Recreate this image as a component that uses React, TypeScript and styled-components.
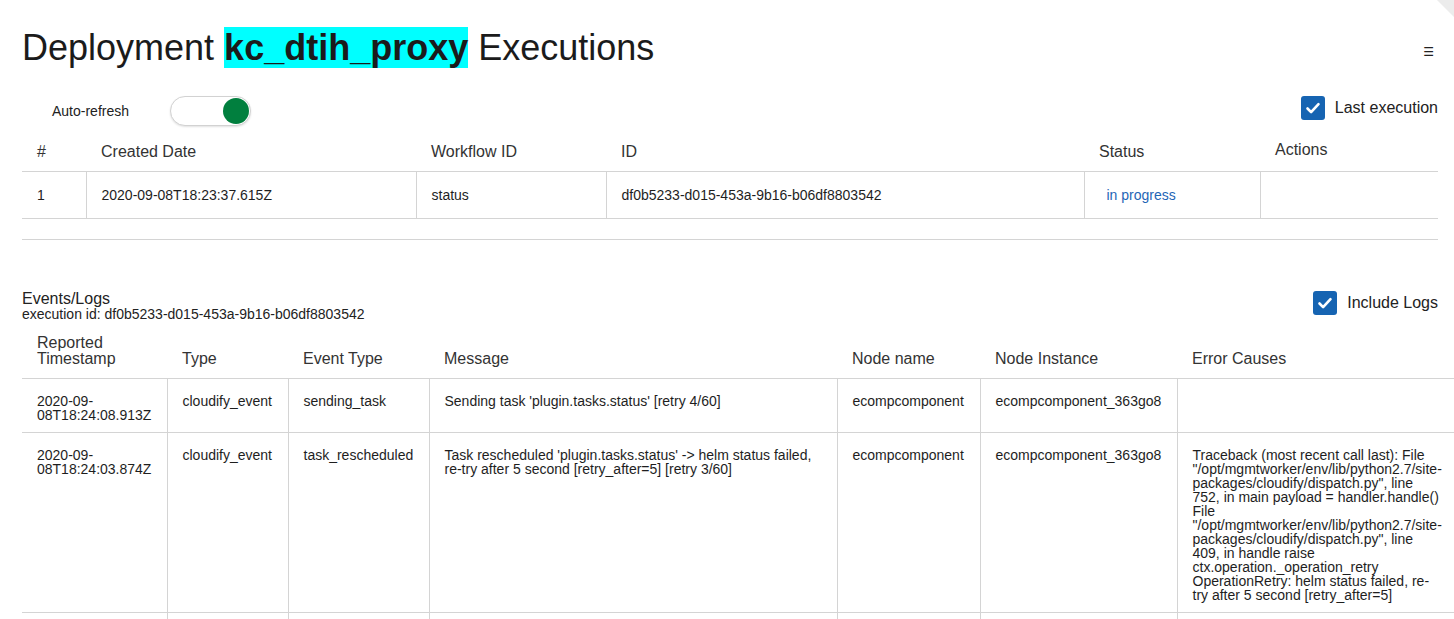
import React from "react";
import styled, { createGlobalStyle } from "styled-components";

const GlobalStyle = createGlobalStyle`
  html, body {
    margin: 0;
    padding: 0;
    background: #fff;
    overflow-x: hidden;
  }
  body {
    font-family: "Liberation Sans", Arial, sans-serif;
    color: #222;
  }
`;

const Page = styled.div`
  position: relative;
  padding: 27px 16px 0 22px;
`;

const CornerFold = styled.div`
  position: absolute;
  top: 0;
  right: 0;
  width: 0;
  height: 0;
  border-top: 17px solid #ececec;
  border-left: 17px solid transparent;
`;

const Header = styled.div`
  display: flex;
  justify-content: space-between;
  align-items: flex-end;
`;

const Title = styled.h1`
  margin: 0;
  font-size: 36px;
  font-weight: 400;
  line-height: 41px;
  color: #1b1b1b;
`;

const Highlight = styled.span`
  background: #00ffff;
  font-weight: 700;
`;

const MenuButton = styled.span`
  font-family: "DejaVu Sans", sans-serif;
  font-size: 12px;
  line-height: 13px;
  margin: 0 4px 9px 0;
  color: #222;
`;

const Controls = styled.div`
  display: flex;
  justify-content: space-between;
  align-items: flex-start;
  min-height: 32px;
  margin-top: 28px;
`;

const RefreshGroup = styled.div`
  display: flex;
  align-items: center;
  gap: 41px;
  padding-left: 30px;
  font-size: 14px;
  color: #222;
`;

const Toggle = styled.div<{ $on: boolean }>`
  box-sizing: border-box;
  width: 81px;
  height: 30px;
  border: 1px solid #d2d2d2;
  border-radius: 15px;
  background: #fff;
  box-shadow: 0 1px 2px rgba(0, 0, 0, 0.12);
  display: flex;
  align-items: center;
  justify-content: ${(p) => (p.$on ? "flex-end" : "flex-start")};
  padding: 0 1px;
`;

const Knob = styled.span`
  width: 26px;
  height: 26px;
  border-radius: 50%;
  background: #017f3e;
`;

const CheckLabel = styled.label`
  display: flex;
  align-items: center;
  gap: 10px;
  font-size: 16px;
  color: #222;
`;

const Box = styled.span`
  width: 24px;
  height: 24px;
  border-radius: 3px;
  background: #1664b2;
  display: flex;
  align-items: center;
  justify-content: center;
`;

const Table = styled.table<{ $width: number }>`
  width: ${(p) => p.$width}px;
  table-layout: fixed;
  border-collapse: collapse;
  line-height: 1;
`;

const HeadCell = styled.th<{ $raise?: boolean }>`
  text-align: left;
  vertical-align: bottom;
  font-weight: 400;
  font-size: 16px;
  color: #333;
  padding: 14px 15px ${(p) => (p.$raise ? 13 : 11)}px;
  border-bottom: 1px solid #d4d4d4;
`;

const Cell = styled.td`
  vertical-align: top;
  font-size: 14px;
  color: #1e1e1e;
  padding: 15px 15px 10px;
  border-bottom: 1px solid #d4d4d4;
  border-left: 1px solid #d4d4d4;
  word-wrap: break-word;
  &:first-child {
    border-left: none;
  }
`;

const ExecCell = styled(Cell)`
  padding: 16px 15px;
`;

const FillerCell = styled(Cell)`
  height: 40px;
`;

const StatusLink = styled.a`
  color: #1f66b6;
  text-decoration: none;
  padding-left: 7px;
`;

const Divider = styled.div`
  height: 1px;
  width: 1416px;
  background: #d4d4d4;
  margin-top: 20px;
`;

const EventsHeader = styled.div`
  display: flex;
  justify-content: space-between;
  align-items: flex-start;
  margin-top: 51px;
`;

const EventsTitle = styled.div`
  font-size: 16px;
  line-height: 16px;
  color: #222;
`;

const ExecId = styled.div`
  font-size: 14px;
  line-height: 14px;
  color: #222;
`;

const Check = () => (
  <Box>
    <svg width="16" height="16" viewBox="0 0 16 16">
      <path d="M2.5 8.5l3.6 3.6 7.4-8" fill="none" stroke="#fff" strokeWidth="2.6" strokeLinecap="round" strokeLinejoin="round" />
    </svg>
  </Box>
);

const execCols = [64, 330, 190, 478, 176, 178];
const eventCols = [145, 121, 141, 408, 143, 197, 280];

const events = [
  {
    ts: "2020-09-08T18:24:08.913Z",
    type: "cloudify_event",
    eventType: "sending_task",
    message: "Sending task 'plugin.tasks.status' [retry 4/60]",
    node: "ecompcomponent",
    instance: "ecompcomponent_363go8",
    error: "",
  },
  {
    ts: "2020-09-08T18:24:03.874Z",
    type: "cloudify_event",
    eventType: "task_rescheduled",
    message: "Task rescheduled 'plugin.tasks.status' -> helm status failed, re-try after 5 second [retry_after=5] [retry 3/60]",
    node: "ecompcomponent",
    instance: "ecompcomponent_363go8",
    error:
      'Traceback (most recent call last): File "/opt/mgmtworker/env/lib/python2.7/site-packages/cloudify/dispatch.py", line 752, in main payload = handler.handle() File "/opt/mgmtworker/env/lib/python2.7/site-packages/cloudify/dispatch.py", line 409, in handle raise ctx.operation._operation_retry OperationRetry: helm status failed, re-try after 5 second [retry_after=5]',
  },
];

export default function App() {
  return (
    <Page>
      <GlobalStyle />
      <CornerFold />
      <Header>
        <Title>
          Deployment <Highlight>kc_dtih_proxy</Highlight> Executions
        </Title>
        <MenuButton>☰</MenuButton>
      </Header>

      <Controls>
        <RefreshGroup>
          <span>Auto-refresh</span>
          <Toggle $on>
            <Knob />
          </Toggle>
        </RefreshGroup>
        <CheckLabel>
          <Check />
          Last execution
        </CheckLabel>
      </Controls>

      <Table $width={1416}>
        <colgroup>
          {execCols.map((w, i) => (
            <col key={i} style={{ width: w }} />
          ))}
        </colgroup>
        <thead>
          <tr>
            <HeadCell>#</HeadCell>
            <HeadCell>Created Date</HeadCell>
            <HeadCell>Workflow ID</HeadCell>
            <HeadCell>ID</HeadCell>
            <HeadCell>Status</HeadCell>
            <HeadCell $raise>Actions</HeadCell>
          </tr>
        </thead>
        <tbody>
          <tr>
            <ExecCell>1</ExecCell>
            <ExecCell>2020-09-08T18:23:37.615Z</ExecCell>
            <ExecCell>status</ExecCell>
            <ExecCell>df0b5233-d015-453a-9b16-b06df8803542</ExecCell>
            <ExecCell>
              <StatusLink href="#">in progress</StatusLink>
            </ExecCell>
            <ExecCell />
          </tr>
        </tbody>
      </Table>
      <Divider />

      <EventsHeader>
        <div>
          <EventsTitle>Events/Logs</EventsTitle>
          <ExecId>execution id: df0b5233-d015-453a-9b16-b06df8803542</ExecId>
        </div>
        <CheckLabel>
          <Check />
          Include Logs
        </CheckLabel>
      </EventsHeader>

      <Table $width={1435}>
        <colgroup>
          {eventCols.map((w, i) => (
            <col key={i} style={{ width: w }} />
          ))}
        </colgroup>
        <thead>
          <tr>
            <HeadCell>Reported Timestamp</HeadCell>
            <HeadCell>Type</HeadCell>
            <HeadCell>Event Type</HeadCell>
            <HeadCell>Message</HeadCell>
            <HeadCell>Node name</HeadCell>
            <HeadCell>Node Instance</HeadCell>
            <HeadCell>Error Causes</HeadCell>
          </tr>
        </thead>
        <tbody>
          {events.map((e) => (
            <tr key={e.ts}>
              <Cell>{e.ts}</Cell>
              <Cell>{e.type}</Cell>
              <Cell>{e.eventType}</Cell>
              <Cell>{e.message}</Cell>
              <Cell>{e.node}</Cell>
              <Cell>{e.instance}</Cell>
              <Cell>{e.error}</Cell>
            </tr>
          ))}
          <tr>
            {eventCols.map((_, i) => (
              <FillerCell key={i} />
            ))}
          </tr>
        </tbody>
      </Table>
    </Page>
  );
}
